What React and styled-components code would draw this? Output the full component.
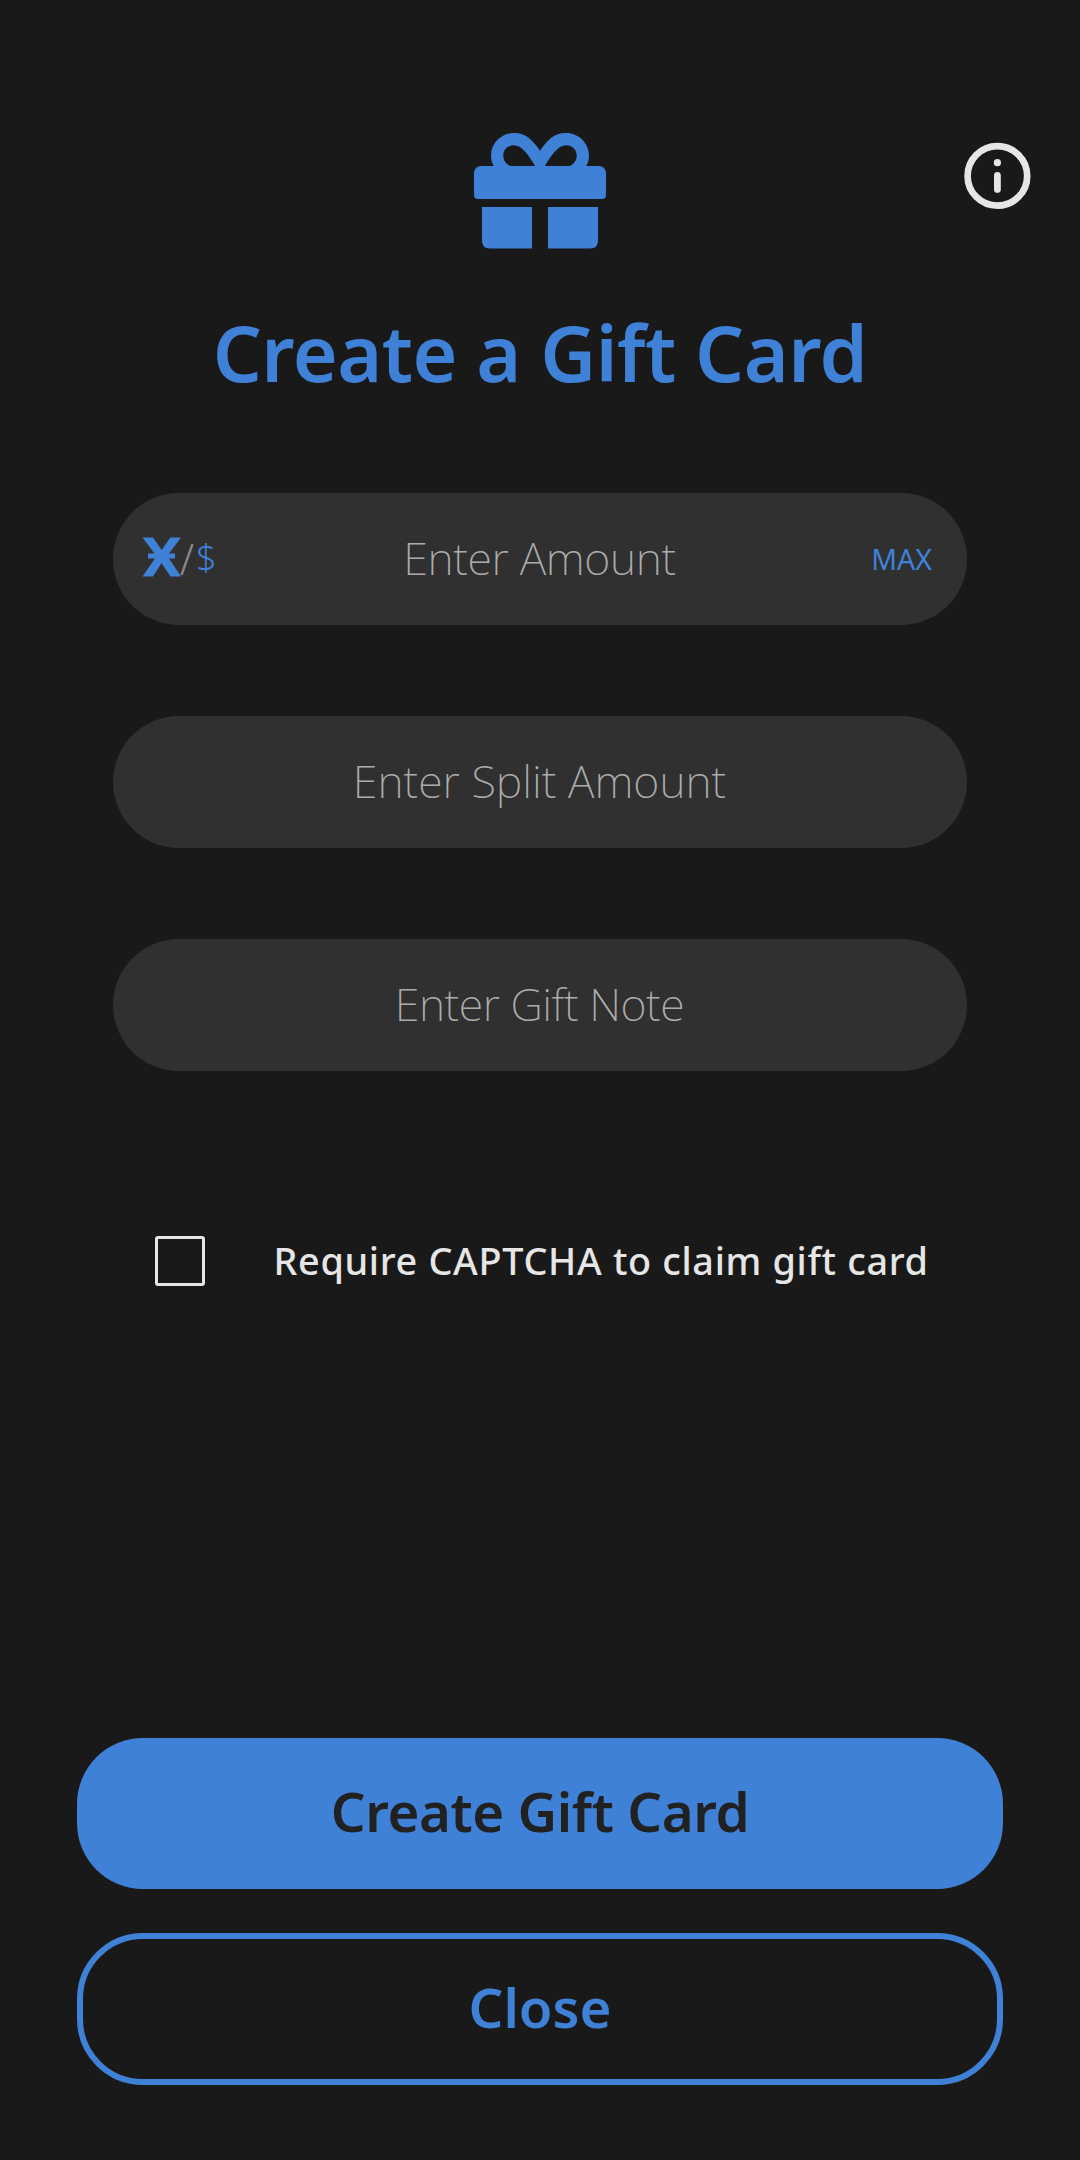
import React from 'react';
import styled, { createGlobalStyle } from 'styled-components';

const blue = '#4081d8';

const GlobalStyle = createGlobalStyle`
  *, *::before, *::after { box-sizing: border-box; }
  body {
    margin: 0;
    background: #191919;
    font-family: "Noto Sans", "Open Sans", sans-serif;
  }
  button { font-family: inherit; margin: 0; }
`;

const Screen = styled.main`
  display: flex;
  flex-direction: column;
  width: 1080px;
  height: 2160px;
  padding: 133px 0 75px;
  overflow: hidden;
`;

const Header = styled.header`
  display: grid;
  grid-template-columns: 1fr auto 1fr;
  height: 117px;
`;

const GiftIcon = styled.svg`
  grid-column: 2;
  width: 132px;
  height: 116px;
  fill: ${blue};
`;

const InfoButton = styled.button`
  justify-self: end;
  align-self: start;
  width: 68px;
  height: 68px;
  margin: 9px 49px 0 0;
  padding: 0;
  border: 0;
  background: none;
  color: #e6e6e6;

  svg { display: block; }
`;

const Title = styled.h1`
  margin: 53px 0 0;
  color: ${blue};
  font-size: 77px;
  font-weight: 600;
  letter-spacing: -0.55px;
  line-height: 100px;
  text-align: center;
`;

const Form = styled.form`
  display: flex;
  flex-direction: column;
  gap: 91px;
  margin: 89.5px 113px 0;
`;

const Field = styled.label`
  display: grid;
  grid-template-columns: 1fr auto 1fr;
  align-items: center;
  height: 132px;
  padding: 0 35px 1px 29px;
  border-radius: 66px;
  background: #303030;
`;

const Placeholder = styled.span`
  grid-column: 2;
  padding-left: 5px;
  color: #acacac;
  font-size: 44.8px;
  font-weight: 200;
  letter-spacing: ${(p) => p.$tracking || 0}px;
  line-height: 60px;
`;

const Units = styled.span`
  display: flex;
  align-items: center;
  color: ${blue};
  font-size: 36px;
  font-weight: 350;
  line-height: 50px;

  svg { flex: none; }
`;

const CoinIcon = styled.svg`
  width: 40px;
  height: 40px;
  margin-top: -2px;
  fill: currentColor;
`;

const Slash = styled.svg`
  width: 14px;
  height: 33px;
  margin: 2px 2px 0 -2px;
`;

const Max = styled.span`
  justify-self: end;
  padding-top: 2px;
  color: ${blue};
  font-size: 28.5px;
  line-height: 40px;
`;

const CheckRow = styled.label`
  display: flex;
  align-items: center;
  gap: 69px;
  height: 50px;
  margin: 165px 0 0 154.5px;
  color: #e6e6e6;
  font-size: 37.8px;
  font-weight: 500;
  letter-spacing: 0.66px;
  white-space: nowrap;
`;

const Box = styled.span`
  width: 50px;
  height: 50px;
  border: 3px solid #e6e6e6;
  border-radius: 3px;
`;

const Actions = styled.footer`
  display: flex;
  flex-direction: column;
  gap: 44px;
  margin: auto 77px 0;
`;

const ActionButton = styled.button`
  height: ${(p) => (p.$outlined ? 152 : 151)}px;
  padding: 0 0 ${(p) => (p.$outlined ? 4 : 6)}px;
  border: ${(p) => (p.$outlined ? `6px solid ${blue}` : '0')};
  border-radius: 66px;
  background: ${(p) => (p.$outlined ? 'transparent' : blue)};
  color: ${(p) => (p.$outlined ? blue : '#212121')};
  font-size: 54.6px;
  font-weight: 600;
  letter-spacing: ${(p) => (p.$outlined ? 0 : -0.4)}px;
  line-height: 70px;
`;

export default function App() {
  return (
    <>
      <GlobalStyle />
      <Screen>
        <Header>
          <GiftIcon viewBox="0 0 132 116">
            <path d="M20 33.500C18.200 30.500 17 26.800 17 22.500C17 10 27.500 0 40 0C52 0 58.500 7 66 17.700C73.500 7 80 0 92 0C104.500 0 115 10 115 22.500C115 26.800 113.800 30.500 112 33.500H92C98.500 33.500 102.700 28.500 102.700 22.500C102.700 16.800 98.500 12.200 92 12.200C84.500 12.200 78 21 70.500 33.500H61.500C54 21 47.500 12.200 40 12.200C33.500 12.200 29.300 16.800 29.300 22.500C29.300 28.500 33.500 33.500 40 33.500Z" />
            <path d="M8 33H124Q132 33 132 41V62Q132 66 128 66H4Q0 66 0 62V41Q0 33 8 33Z" />
            <path d="M8 74H58V115.500H16Q8 115.500 8 107.500Z" />
            <path d="M74 74H124V107.500Q124 115.500 116 115.500H74Z" />
          </GiftIcon>
          <InfoButton type="button" aria-label="Info">
            <svg width="68" height="68" viewBox="0 0 68 68" fill="currentColor">
              <circle cx="34.400" cy="33.900" r="29.800" fill="none" stroke="currentColor" strokeWidth="6.700" />
              <circle cx="34.400" cy="20.700" r="3.600" />
              <rect x="31" y="30" width="6.800" height="20.800" rx="3.400" />
            </svg>
          </InfoButton>
        </Header>

        <Title>Create a Gift Card</Title>

        <Form>
          <Field>
            <Units>
              <CoinIcon viewBox="0 0 40 40">
                <path d="M0.500 0.500H11L19.700 13L28.300 0.500H39L27 16.500H33V21.500H27L39 39.500H28.500L19.500 26L11 39.500H0.500L13 21.500H6V16.500H12.500Z" />
              </CoinIcon>
              <Slash viewBox="0 0 14 33">
                <path d="M12.500 1L1.500 32" stroke="#858585" strokeWidth="2.400" />
              </Slash>
              $
            </Units>
            <Placeholder $tracking={-0.35}>Enter Amount</Placeholder>
            <Max>MAX</Max>
          </Field>
          <Field>
            <Placeholder>Enter Split Amount</Placeholder>
          </Field>
          <Field>
            <Placeholder $tracking={-0.5}>Enter Gift Note</Placeholder>
          </Field>
        </Form>

        <CheckRow>
          <Box />
          Require CAPTCHA to claim gift card
        </CheckRow>

        <Actions>
          <ActionButton type="button">Create Gift Card</ActionButton>
          <ActionButton type="button" $outlined>Close</ActionButton>
        </Actions>
      </Screen>
    </>
  );
}
